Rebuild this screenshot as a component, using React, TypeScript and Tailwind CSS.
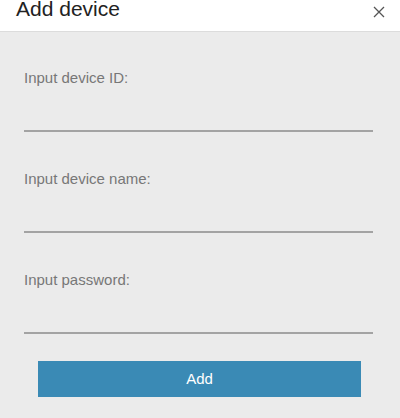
import { useState } from "react";

const fields = [
  { id: "deviceId", label: "Input device ID:", type: "text" },
  { id: "deviceName", label: "Input device name:", type: "text" },
  { id: "password", label: "Input password:", type: "password" },
];

export default function App() {
  const [values, setValues] = useState<Record<string, string>>({});

  return (
    <div className="w-[400px] h-[418px] overflow-hidden bg-[#ebebeb] font-['Liberation_Sans',Arial,sans-serif]">
      {/* Header */}
      <div className="h-[32px] bg-white border-b border-[#dcdcdc] flex items-start justify-between pl-[16px] pr-[15px]">
        <h2 className="-mt-[3px] text-[21px] leading-[24px] text-[#222]">Add device</h2>
        <button aria-label="Close" className="mt-[6px] w-[12px] h-[12px] text-[#555]">
          <svg viewBox="0 0 12 12" width="12" height="12" fill="none" stroke="currentColor" strokeWidth="1.3">
            <path d="M1 1 L11 11 M11 1 L1 11" />
          </svg>
        </button>
      </div>

      {/* Body */}
      <div className="pt-[37px] pl-[24px] flex flex-col">
        <div className="flex flex-col gap-[38px]">
          {fields.map((f) => (
            <div key={f.id}>
              <label htmlFor={f.id} className="block text-[15px] leading-[17px] text-[#777]">
                {f.label}
              </label>
              <input
                id={f.id}
                type={f.type}
                value={values[f.id] ?? ""}
                onChange={(e) => setValues({ ...values, [f.id]: e.target.value })}
                className="block w-[349px] h-[46px] bg-transparent border-b-2 border-[#a3a3a3] outline-none text-[15px] text-[#333]"
              />
            </div>
          ))}
        </div>

        <button className="mt-[27px] ml-[14px] w-[323px] h-[36px] bg-[#3a8ab5] text-white text-[15px]">
          Add
        </button>
      </div>
    </div>
  );
}
